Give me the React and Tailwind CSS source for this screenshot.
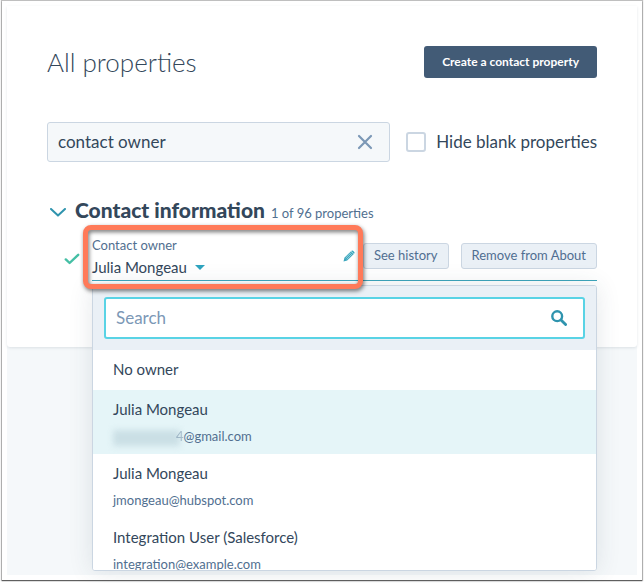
import { useState } from "react";

const owners = [
  { id: 0, name: "No owner" },
  { id: 1, name: "Julia Mongeau", email: "@gmail.com", hidden: true },
  { id: 2, name: "Julia Mongeau", email: "jmongeau@hubspot.com" },
  { id: 3, name: "Integration User (Salesforce)", email: "integration@example.com" },
];

function OwnerOption({ owner, selected, onSelect }) {
  return (
    <li role="option" aria-selected={selected}>
      <button
        type="button"
        onClick={() => onSelect(owner.id)}
        className={`block w-full px-5 text-left ${selected ? "bg-[#e5f5f8]" : "bg-white"}`}
      >
        <span className="block h-10 text-[15px] leading-[38px]">{owner.name}</span>
        {owner.email && (
          <span className="flex h-6 items-start text-[13px] leading-3 text-[#516f90]">
            {owner.hidden && (
              <>
                <span className="-mr-1 h-4 w-[67px] bg-[#cadfe5] blur-[3px]" />
                <span className="opacity-40">4</span>
              </>
            )}
            <span>{owner.email}</span>
          </span>
        )}
      </button>
    </li>
  );
}

function OwnerMenu({ selectedId, onSelect }) {
  return (
    <div className="absolute inset-x-0 top-full z-10 mt-[5px] h-[286px] overflow-hidden rounded-[3px] border border-[#cbd6e2] bg-white shadow-[0_1px_24px_rgba(45,62,80,0.12)]">
      <div className="h-16 bg-[#eaf0f6] px-[11px] pt-[11px]">
        <div className="flex h-[42px] items-center rounded-[3px] border-2 border-[#59d3e5] bg-white pr-4 pl-[10px]">
          <input
            type="text"
            aria-label="Search owners"
            placeholder="Search"
            className="min-w-0 flex-1 bg-transparent text-[17px] outline-none placeholder:text-[#7c98b6]"
          />
          <svg viewBox="0 0 16 16" className="h-4 w-4" fill="none" stroke="#2f94ae">
            <circle cx="6.2" cy="6.2" r="4.9" strokeWidth="2.4" />
            <path d="M10 10 L14.6 14.6" strokeWidth="2.8" strokeLinecap="round" />
          </svg>
        </div>
      </div>
      <ul role="listbox" aria-label="Contact owner">
        {owners.map((owner) => (
          <OwnerOption
            key={owner.id}
            owner={owner}
            selected={owner.id === selectedId}
            onSelect={onSelect}
          />
        ))}
      </ul>
    </div>
  );
}

function SmallButton({ children }) {
  return (
    <button
      type="button"
      className="h-[26px] rounded-[3px] border border-[#cbd6e2] bg-[#eaf0f6] px-[10px] text-[13px] whitespace-nowrap text-[#506e91]"
    >
      {children}
    </button>
  );
}

export default function App() {
  const [filter, setFilter] = useState("contact owner");
  const [hideBlank, setHideBlank] = useState(false);
  const [ownerId, setOwnerId] = useState(1);

  return (
    <div className="flex min-h-screen bg-white pt-px pr-[2px] pb-[3px] pl-[2px] font-['Lato','Noto_Sans',sans-serif] text-[#33475b]">
      <div className="flex flex-1 flex-col bg-white p-[5px] shadow-[0_0_1px_1px_rgba(0,0,0,0.25),0_1px_1px_rgba(0,0,0,0.5)]">
        <main className="flex-1 bg-[#f5f8fa]">
          <section className="rounded-b-[3px] bg-white px-10 pt-10 pb-[66px] shadow-[0_1px_3px_rgba(45,62,80,0.12)]">
            <header className="flex items-center justify-between">
              <h1 className="text-[26px] leading-8 font-light">All properties</h1>
              <button
                type="button"
                className="h-8 rounded-[3px] bg-[#425b76] px-[18px] text-xs font-bold text-white"
              >
                Create a contact property
              </button>
            </header>

            <div className="mt-11 flex items-center gap-4">
              <div className="flex h-10 min-w-0 flex-1 items-center rounded-[3px] border border-[#cbd6e2] bg-[#f5f8fa] pr-4 pl-[10px]">
                <input
                  type="text"
                  aria-label="Search properties"
                  value={filter}
                  onChange={(e) => setFilter(e.target.value)}
                  className="min-w-0 flex-1 bg-transparent text-[17px] outline-none"
                />
                <button type="button" aria-label="Clear search" onClick={() => setFilter("")}>
                  <svg viewBox="0 0 16 16" className="h-4 w-4" fill="none" stroke="#7c98b6" strokeWidth="2.2" strokeLinecap="round">
                    <path d="M2 2 L14 14 M14 2 L2 14" />
                  </svg>
                </button>
              </div>
              <label className="flex items-center gap-[10px] text-[17px] whitespace-nowrap">
                <input
                  type="checkbox"
                  checked={hideBlank}
                  onChange={(e) => setHideBlank(e.target.checked)}
                  className="h-5 w-5 appearance-none rounded-[3px] border-2 border-[#cbd6e2] bg-white checked:bg-[#00a4bd]"
                />
                Hide blank properties
              </label>
            </div>

            <div className="mt-9 flex items-center">
              <button type="button" aria-label="Collapse section" className="mt-1 mr-[9px] ml-[3px]">
                <svg viewBox="0 0 16 9" className="h-[9px] w-4" fill="none" stroke="#2f94ae" strokeWidth="2" strokeLinecap="round" strokeLinejoin="round">
                  <path d="M1 1 L8 7.6 L15 1" />
                </svg>
              </button>
              <div className="flex items-baseline gap-[6px]">
                <h2 className="text-[21px] leading-6 font-black">Contact information</h2>
                <span className="text-[13px] leading-5 text-[#516f90]">1 of 96 properties</span>
              </div>
            </div>

            <div className="relative mt-2 ml-[45px] flex h-[50px] items-center border-b border-[#3ea5bb]">
              <svg viewBox="0 0 16 12" className="absolute top-[22px] -left-7 h-3 w-4" fill="none" stroke="#45bfa5" strokeWidth="2.4" strokeLinecap="round" strokeLinejoin="round">
                <path d="M1.8 6.4 L5.6 10 L14.2 1.8" />
              </svg>
              <div className="min-w-0 flex-1 pt-[5px]">
                <div className="text-[13px] leading-[18px] text-[#516f90]">Contact owner</div>
                <button type="button" aria-haspopup="listbox" aria-expanded="true" className="flex items-center gap-2 text-[15px] leading-[26px]">
                  Julia Mongeau
                  <svg viewBox="0 0 10 5" className="h-[5px] w-[10px]" fill="#2fa4bf">
                    <path d="M0 0 H10 L5 5 Z" />
                  </svg>
                </button>
              </div>
              <button type="button" aria-label="Edit contact owner" className="mr-2">
                <svg viewBox="0 0 12 12" className="h-3 w-3">
                  <path d="M0.5 11.5 L1.4 7.8 L8 1.2 L10.8 4 L4.2 10.6 Z" fill="#3aa6bd" />
                  <path d="M8.6 0.8 Q9.3 0.1 10 0.7 L11.3 2 Q11.9 2.7 11.3 3.4 L10.9 3.7 L8.2 1.1 Z" fill="#3aa6bd" />
                  <path d="M2.6 8.2 L8.3 2.5 M3.7 9.4 L9.4 3.7" stroke="#d5eef3" strokeWidth="0.6" />
                </svg>
              </button>
              <div className="flex gap-3">
                <SmallButton>See history</SmallButton>
                <SmallButton>Remove from About</SmallButton>
              </div>

              <OwnerMenu selectedId={ownerId} onSelect={setOwnerId} />

              {/* callout ring around the owner field */}
              <div className="pointer-events-none absolute -top-[6px] right-[234px] -bottom-[9px] -left-[9px] z-20 rounded-lg border-[5px] border-[#ff7a59] drop-shadow-[1px_2px_2px_rgba(0,0,0,0.55)]" />
            </div>
          </section>
        </main>
      </div>
    </div>
  );
}
